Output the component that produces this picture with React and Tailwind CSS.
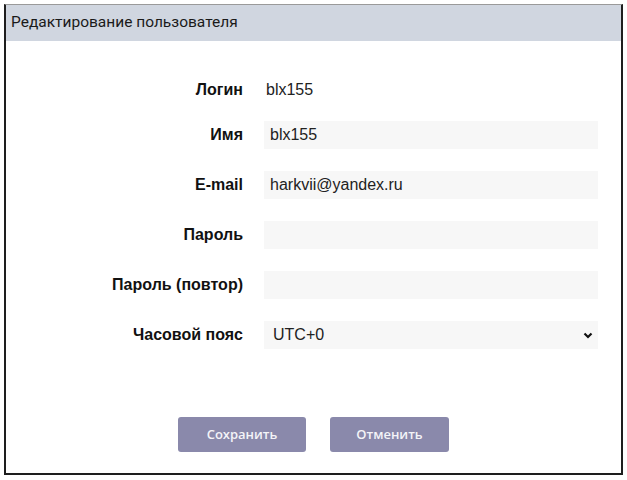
import React from "react";

const rows = [
  { label: "Имя", value: "blx155" },
  { label: "E-mail", value: "harkvii@yandex.ru" },
  { label: "Пароль", value: "" },
  { label: "Пароль (повтор)", value: "" },
];

export default function App() {
  return (
    <div className="w-[627px] h-[480px] bg-white pt-[4px] pl-[4px]" style={{ fontFamily: "'Liberation Sans', Arial, sans-serif" }}>
      <div className="w-[619px] h-[471px] border-2 border-t border-[#1e1e1e] border-t-[#9a9a9a] flex flex-col">
        <div className="h-[36px] bg-[#d0d6e0] flex items-center pl-[5px] text-[15.5px] text-[#1a1a1a]" style={{ fontFamily: "Roboto, sans-serif" }}>
          Редактирование пользователя
        </div>
        <div className="flex flex-col pt-[34px]">
          <div className="flex items-center h-[28px] mb-[18px]">
            <div className="w-[237px] text-right font-bold text-[16px] text-[#111] pt-[2px]">Логин</div>
            <div className="ml-[21px] pl-[2px] text-[16px] text-[#222] pt-[2px]">blx155</div>
          </div>
          {rows.map((r) => (
            <div key={r.label} className="flex items-center h-[28px] mb-[22px]">
              <div className="w-[237px] text-right font-bold text-[16px] text-[#111]">{r.label}</div>
              <div className="ml-[21px] w-[334px] h-[28px] bg-[#f7f7f7] pl-[6px] flex items-center text-[16px] text-[#222]">
                {r.value}
              </div>
            </div>
          ))}
          <div className="flex items-center h-[28px]">
            <div className="w-[237px] text-right font-bold text-[16px] text-[#111]">Часовой пояс</div>
            <div className="ml-[21px] w-[334px] h-[28px] bg-[#f7f7f7] pl-[9px] pr-[5px] flex items-center justify-between text-[16px] text-[#222]">
              <span>UTC+0</span>
              <svg width="10" height="7" viewBox="0 0 10 7">
                <path d="M1.5 1.5 L5 5 L8.5 1.5" stroke="#111" strokeWidth="2.2" fill="none" />
              </svg>
            </div>
          </div>
        </div>
        <div className="flex justify-center gap-[24px] mt-[68px]">
          <button className="w-[128px] h-[35px] rounded-[3px] bg-[#8a89ab] text-[#f4f4f8] text-[13px] font-semibold" style={{ fontFamily: "'Open Sans', sans-serif" }}>
            Сохранить
          </button>
          <button className="w-[119px] h-[35px] rounded-[3px] bg-[#8a89ab] text-[#f4f4f8] text-[13px] font-semibold" style={{ fontFamily: "'Open Sans', sans-serif" }}>
            Отменить
          </button>
        </div>
      </div>
    </div>
  );
}
